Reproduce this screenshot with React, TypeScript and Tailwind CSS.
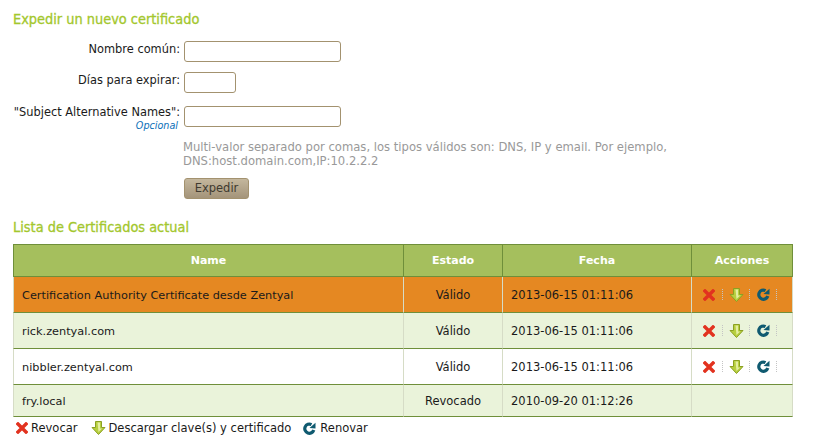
const font = { fontFamily: '"DejaVu Sans", sans-serif' };
const cond = { fontFamily: '"DejaVu Sans Condensed", "DejaVu Sans", sans-serif' };

function X() {
  return (
    <svg width="12" height="12" viewBox="0 0 12 12" className="block">
      <path d="M2 2 L10 10 M10 2 L2 10" stroke="#e2321f" strokeWidth="3.4" strokeLinecap="square" />
    </svg>
  );
}
function Down() {
  return (
    <svg width="15" height="14" viewBox="0 0 15 14" className="block">
      <path d="M4.5 0.5 H10.5 V6.5 H14 L7.5 13.5 L1 6.5 H4.5 Z" fill="#b7cf3f" stroke="#8ba022" strokeWidth="1" />
      <path d="M6.5 1.5 H9 V7.5 H11 L7.5 11 Z" fill="#e4eea0" />
    </svg>
  );
}
function Renew() {
  return (
    <svg width="13" height="13" viewBox="0 0 13 13" className="block">
      <path d="M10.8 8 A4.6 4.6 0 1 1 8.5 2.6" fill="none" stroke="#0f5a70" strokeWidth="3.2" />
      <path d="M6.5 6 L12.5 0.8 L12.5 6.6 Z" fill="#0f5a70" />
    </svg>
  );
}
function Sep() {
  return <span className="block h-[11px] w-0 border-l border-dotted border-[#c4c4c4]" />;
}
function Actions() {
  return (
    <div className="flex items-center pl-[11px]">
      <X />
      <span className="ml-[7px] mr-[6px]"><Sep /></span>
      <Down />
      <span className="ml-[5px] mr-[7px]"><Sep /></span>
      <Renew />
      <span className="ml-[6px]"><Sep /></span>
    </div>
  );
}

const rows = [
  { n: "Certification Authority Certificate desde Zentyal", e: "Válido", f: "2013-06-15 01:11:06", a: true, bg: "bg-[#e58822]", h: "h-[36px]" },
  { n: "rick.zentyal.com", e: "Válido", f: "2013-06-15 01:11:06", a: true, bg: "bg-[#eaf3da]", h: "h-[36px]" },
  { n: "nibbler.zentyal.com", e: "Válido", f: "2013-06-15 01:11:06", a: true, bg: "bg-white", h: "h-[36px]" },
  { n: "fry.local", e: "Revocado", f: "2010-09-20 01:12:26", a: false, bg: "bg-[#eaf3da]", h: "h-[32px]" },
];

function Field({ label, opt, input, h, lab }: { label: string; opt?: boolean; input: string; h: string; lab: string }) {
  return (
    <div className={`flex items-start ${h}`}>
      <div className={`w-[180px] shrink-0 text-right text-[11.4px] leading-[14px] text-[#1a1a1a] ${lab}`}>
        <div>{label}</div>
        {opt && <div className="pr-[2px] text-[10.7px] leading-[13px] italic text-[#0b6fb8]" style={cond}>Opcional</div>}
      </div>
      <div className={`ml-[4px] h-[21px] rounded-[3px] border border-[#a3926f] bg-white ${input}`} />
    </div>
  );
}

const bd = "border-b border-b-[#6f8f3a]";

export default function App() {
  return (
    <div className="w-[813px] h-[444px] overflow-hidden bg-white" style={font}>
      <h3 className="pl-[13px] pt-[11px] text-[14.4px] leading-[17px] font-normal text-[#a3c72d] [-webkit-text-stroke:0.3px_#a3c72d]" style={cond}>Expedir un nuevo certificado</h3>
      <div className="mt-[13px]">
        <Field label="Nombre común:" input="w-[157px]" h="h-[31px]" lab="pt-[1px]" />
        <Field label="Días para expirar:" input="w-[52px]" h="h-[34px]" lab="pt-[1px]" />
        <Field label={'"Subject Alternative Names":'} opt input="w-[157px]" h="h-[34px]" lab="-mt-[1px]" />
      </div>
      <p className="ml-[183px] w-[520px] text-[11.6px] leading-[14px] text-[#999999]">
        Multi-valor separado por comas, los tipos válidos son: DNS, IP y email. Por ejemplo, DNS:host.domain.com,IP:10.2.2.2
      </p>
      <button className="mt-[10px] ml-[184px] block h-[21px] w-[65px] rounded-[3px] border border-[#a3926f] bg-gradient-to-b from-[#c4b79d] to-[#a4947a] text-[11.5px] leading-[19px] text-[#3f3a30]">Expedir</button>
      <h3 className="pl-[13px] mt-[20px] text-[14.4px] leading-[17px] font-normal text-[#a3c72d] [-webkit-text-stroke:0.3px_#a3c72d]" style={cond}>Lista de Certificados actual</h3>
      <table className="ml-[13px] mt-[8px] w-[780px] table-fixed border-separate border-spacing-0 text-[11.5px] text-[#1a1a1a]">
        <colgroup>
          <col className="w-[390px]" />
          <col className="w-[99px]" />
          <col className="w-[189px]" />
          <col className="w-[102px]" />
        </colgroup>
        <thead>
          <tr className="h-[33px] bg-[#a5bf5d] text-white">
            {["Name", "Estado", "Fecha", "Acciones"].map((h, i) => (
              <th key={h} className={`p-0 pt-[2px] bg-[#a5bf5d] text-center text-[11px] font-bold border-t border-b border-l border-[#6f8f3a] ${i === 3 ? "border-r" : ""}`}>{h}</th>
            ))}
          </tr>
        </thead>
        <tbody>
          {rows.map((r) => (
            <tr key={r.n} className={`${r.h} ${r.bg}`}>
              <td className={`p-0 pl-[8px] pt-[3px] text-[11.3px] border-l border-l-[#d6dcc6] ${bd}`}>{r.n}</td>
              <td className={`p-0 pt-[3px] text-center border-l border-l-[#d6dcc6] ${bd}`}>{r.e}</td>
              <td className={`p-0 pt-[3px] pl-[8px] border-l border-l-[#d6dcc6] ${bd}`}>{r.f}</td>
              <td className={`p-0 border-l border-r border-x-[#d6dcc6] ${bd}`}>{r.a && <Actions />}</td>
            </tr>
          ))}
        </tbody>
      </table>
      <div className="mt-[4px] ml-[16px] flex items-center text-[11.5px] leading-[14px] text-[#1a1a1a]">
        <X />
        <span className="ml-[3px]">Revocar</span>
        <span className="ml-[13px]"><Down /></span>
        <span className="ml-[3px]">Descargar clave(s) y certificado</span>
        <span className="ml-[12px]"><Renew /></span>
        <span className="ml-[4px]">Renovar</span>
      </div>
    </div>
  );
}
